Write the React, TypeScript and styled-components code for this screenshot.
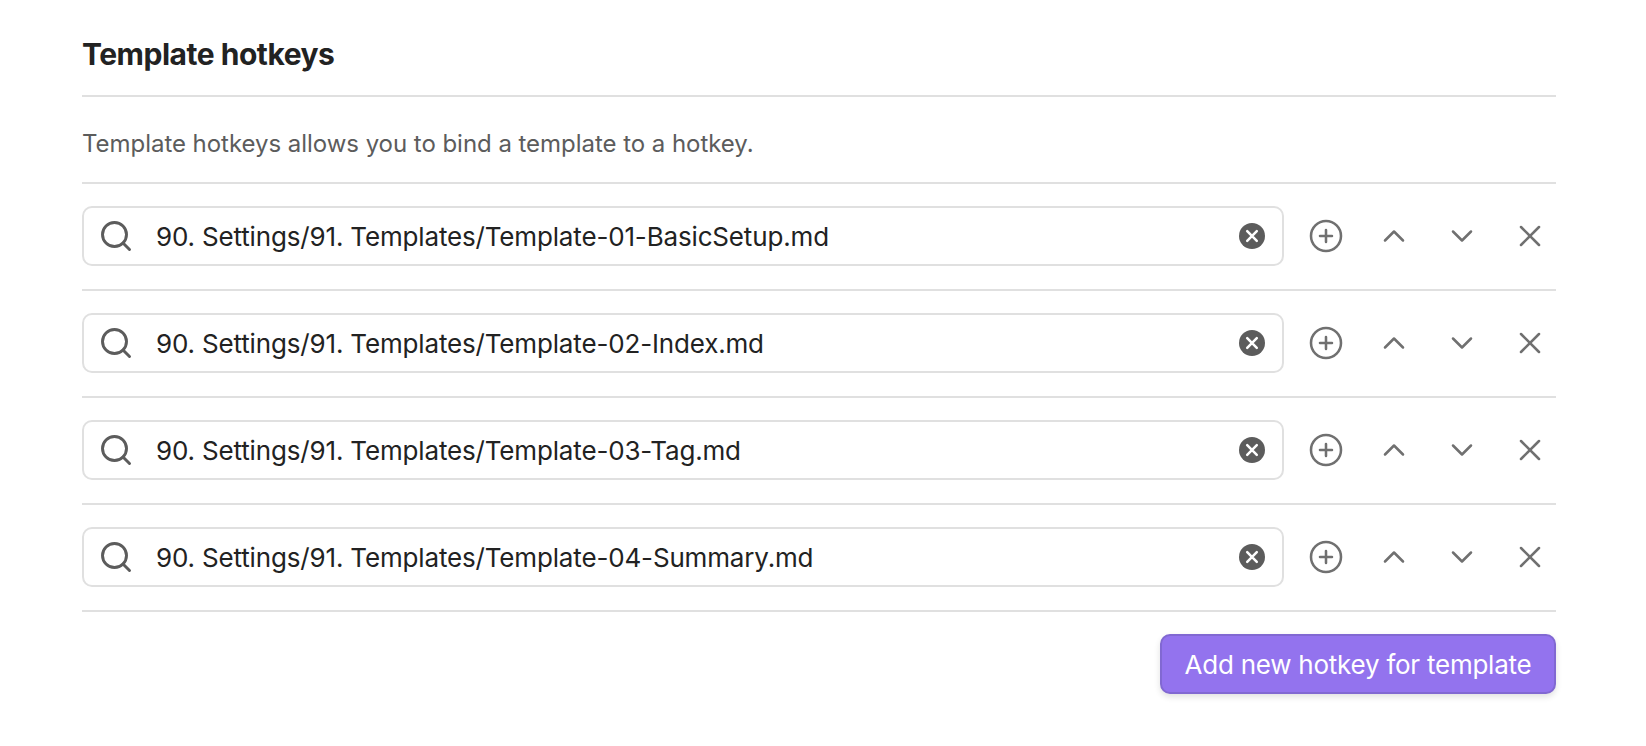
import React from "react";
import styled, { createGlobalStyle } from "styled-components";
import { Search, CirclePlus, ChevronUp, ChevronDown, X } from "lucide-react";

const Global = createGlobalStyle`
  * { box-sizing: border-box; }
  body { margin: 0; background: #fff; font-family: Inter, sans-serif; color: #222; }
`;
const Page = styled.main`
  width: 1646px; height: 746px; padding: 30px 90px 0 82px; background: #fff;
`;
const Title = styled.h1`
  margin: 0; height: 67px; padding-top: 2px; font-size: 30px; line-height: 44px; font-weight: 650;
  letter-spacing: -0.48px; border-bottom: 2px solid #e0e0e0;
`;
const Description = styled.p`
  margin: 0; height: 87px; padding-top: 31px; font-size: 24px; line-height: 32px; color: #5c5c5c;
  letter-spacing: -0.04px; font-weight: 430; border-bottom: 2px solid #e0e0e0;
`;
const Row = styled.div`
  height: 107px; display: flex; align-items: flex-start; padding-top: 22px;
  border-bottom: 2px solid #e0e0e0;
`;
const Field = styled.div`
  width: 1202px; height: 60px; display: flex; align-items: center; padding: 0 17px 0 14px;
  border: 2px solid #e0e0e0; border-radius: 10px; background: #fff; color: #5c5c5c;
`;
const Path = styled.span`
  flex: 1; margin-left: 22px; padding-top: 2px; font-size: 26px; line-height: 32px;
  letter-spacing: -0.16px; font-weight: 430; color: #222; white-space: nowrap;
`;
const Actions = styled.div`
  display: flex; align-items: center; height: 60px; gap: 32px; padding-left: 24px; color: #707070;
`;
const Footer = styled.footer`
  display: flex; justify-content: flex-end; padding-top: 22px;
`;
const AddButton = styled.button`
  width: 396px; height: 60px; border: 2px solid #8168d2; border-radius: 10px; background: #9373ee;
  box-shadow: 0 3px 6px rgba(0, 0, 0, 0.12); color: #fff; font: 440 26px Inter, sans-serif;
  letter-spacing: -0.24px; white-space: nowrap; padding: 0;
`;

const ClearIcon = () => (
  <svg width="26" height="26" viewBox="0 0 26 26" fill="none">
    <circle cx="13" cy="13" r="13" fill="#5c5c5c" />
    <path d="M8.2 8.2l9.6 9.6M17.8 8.2l-9.6 9.6" stroke="#fff" strokeWidth="2.5" strokeLinecap="round" />
  </svg>
);

const rows = ["01-BasicSetup", "02-Index", "03-Tag", "04-Summary"];
const action = { size: 36, strokeWidth: 1.7 };

export default function App() {
  return (
    <Page>
      <Global />
      <Title>Template hotkeys</Title>
      <Description>Template hotkeys allows you to bind a template to a hotkey.</Description>
      {rows.map((name) => (
        <Row key={name}>
          <Field>
            <Search size={36} strokeWidth={1.95} />
            <Path>{`90. Settings/91. Templates/Template-${name}.md`}</Path>
            <ClearIcon />
          </Field>
          <Actions>
            <CirclePlus {...action} />
            <ChevronUp {...action} />
            <ChevronDown {...action} />
            <X {...action} />
          </Actions>
        </Row>
      ))}
      <Footer><AddButton>Add new hotkey for template</AddButton></Footer>
    </Page>
  );
}
